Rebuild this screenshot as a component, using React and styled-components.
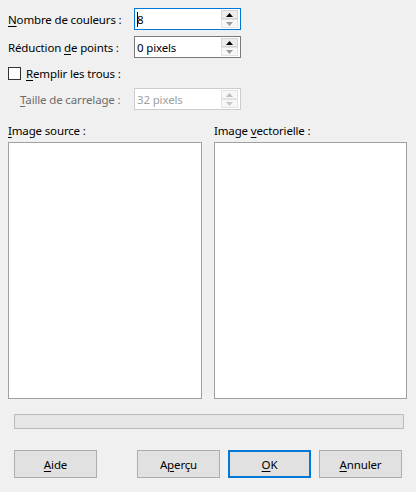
import React from 'react'
import styled, { createGlobalStyle } from 'styled-components'

const Global = createGlobalStyle`
html, body {
  margin: 0;
  padding: 0;
  background: #f0f0f0;
}
body {
  font-family: "Noto Sans", "Segoe UI", sans-serif;
  font-size: 11.5px;
  letter-spacing: -0.15px;
  line-height: 15px;
  color: #000;
}
`;

const Dialog = styled.div`
width: 416px;
height: 492px;
box-sizing: border-box;
display: flex;
flex-direction: column;
background: #f0f0f0;
`;

const Fields = styled.div`
display: grid;
grid-template-columns: 126px 107px;
row-gap: 6px;
padding: 8px 0 0 8px;
align-items: center;
`;

const Label = styled.span`
color: ${p => (p.disabled ? '#6d6d6d' : '#000')};
padding-left: ${p => p.indent || 0}px;
white-space: nowrap;
`;

const U = styled.span`
text-decoration: underline;
text-underline-offset: 2px;
`;

const Spin = styled.div`
height: 22px;
box-sizing: border-box;
border: 1px solid ${p => (p.focused ? '#0078d7' : p.disabled ? '#cccccc' : '#7a7a7a')};
background: #fff;
display: flex;
align-items: stretch;
`;

const SpinText = styled.div`
flex: 1;
display: flex;
align-items: center;
padding-left: 2px;
color: ${p => (p.disabled ? '#a0a0a0' : '#000')};
`;

const Caret = styled.span`
width: 1px;
height: 15px;
background: #000;
margin-right: -1px;
`;

const SpinButtons = styled.div`
width: 17px;
display: flex;
flex-direction: column;
padding: 1px 2px 1px 0;
`;

const SpinButton = styled.div`
flex: 1;
box-sizing: border-box;
border: 1px solid ${p => (p.disabled ? '#e3e3e3' : '#d4d4d4')};
background: ${p => (p.disabled ? '#f7f7f7' : '#ececec')};
display: flex;
align-items: center;
justify-content: center;
`;

const Arrow = ({ up, color }) => (
  <svg width="7" height="4" viewBox="0 0 7 4">
    {up ? <polygon points="0,4 7,4 3.5,0" fill={color} /> : <polygon points="0,0 7,0 3.5,4" fill={color} />}
  </svg>
);

const CheckRow = styled.label`
grid-column: 1 / 3;
display: flex;
align-items: center;
gap: 5px;
height: 16px;
margin: 1px 0;
`;

const Box = styled.span`
width: 13px;
height: 13px;
box-sizing: border-box;
border: 1px solid #333;
background: #fff;
`;

const Panels = styled.div`
display: grid;
grid-template-columns: 194px 193px;
column-gap: 12px;
padding: 13px 0 0 8px;
`;

const PanelCol = styled.div`
display: flex;
flex-direction: column;
gap: 4px;
`;

const Panel = styled.div`
height: 257px;
box-sizing: border-box;
border: 1px solid #a0a0a0;
background: #fff;
`;

const Progress = styled.div`
margin: 15px 12px 0 14px;
height: 15px;
box-sizing: border-box;
border: 1px solid #bcbcbc;
background: #e6e6e6;
`;

const Footer = styled.div`
display: flex;
align-items: center;
padding: 21px 14px 0 14px;
gap: 8px;
`;

const Spacer = styled.div`
flex: 1;
`;

const Button = styled.button`
width: 83px;
height: 28px;
box-sizing: border-box;
font-family: inherit;
font-size: inherit;
letter-spacing: inherit;
color: #000;
background: #e1e1e1;
border: ${p => (p.primary ? '2px solid #0078d7' : '1px solid #adadad')};
padding: 0;
margin: 0;
`;

const SpinBox = ({ value, focused, disabled }) => (
  <Spin focused={focused} disabled={disabled}>
    <SpinText disabled={disabled}>
      {focused && <Caret />}
      {value}
    </SpinText>
    <SpinButtons>
      <SpinButton disabled={disabled}>
        <Arrow up color={disabled ? '#bdbdbd' : '#000'} />
      </SpinButton>
      <SpinButton disabled>
        <Arrow color={disabled ? '#c8c8c8' : '#9a9a9a'} />
      </SpinButton>
    </SpinButtons>
  </Spin>
);

export default function App() {
  return (
    <Dialog>
      <Global />
      <Fields>
        <Label><U>N</U>ombre de couleurs :</Label>
        <SpinBox value="8" focused />
        <Label>Réduction <U>d</U>e points :</Label>
        <SpinBox value="0 pixels" />
        <CheckRow>
          <Box />
          <span><U>R</U>emplir les trous :</span>
        </CheckRow>
        <Label disabled indent={12}><U>T</U>aille de carrelage :</Label>
        <SpinBox value="32 pixels" disabled />
      </Fields>
      <Panels>
        <PanelCol>
          <Label><U>I</U>mage source :</Label>
          <Panel />
        </PanelCol>
        <PanelCol>
          <Label>Image <U>v</U>ectorielle :</Label>
          <Panel />
        </PanelCol>
      </Panels>
      <Progress />
      <Footer>
        <Button><U>A</U>ide</Button>
        <Spacer />
        <Button>A<U>p</U>erçu</Button>
        <Button primary><U>O</U>K</Button>
        <Button><U>A</U>nnuler</Button>
      </Footer>
    </Dialog>
  );
}
